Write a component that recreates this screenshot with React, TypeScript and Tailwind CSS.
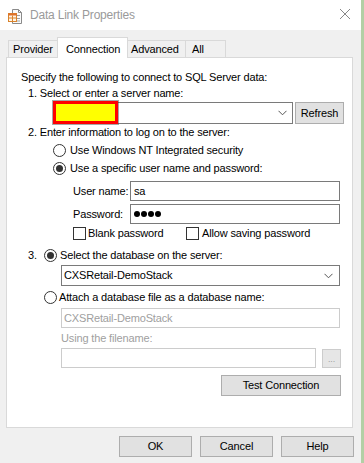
import React from "react";

const Radio = ({ checked }: { checked?: boolean }) => (
  <div className="w-[13px] h-[13px] rounded-full border border-[#333333] bg-white flex items-center justify-center shrink-0">
    {checked && <div className="w-[7px] h-[7px] rounded-full bg-[#333333]" />}
  </div>
);

const Check = () => (
  <div className="w-[13px] h-[13px] border border-[#333333] bg-white shrink-0" />
);

const Chevron = () => (
  <svg width="9" height="6" viewBox="0 0 9 6" className="shrink-0">
    <polyline points="0.5,0.8 4.5,4.8 8.5,0.8" fill="none" stroke="#555" strokeWidth="1" />
  </svg>
);

const Btn = ({ children, w, h = "h-[21px]" }: { children: React.ReactNode; w: string; h?: string }) => (
  <div className={`${w} ${h} bg-[#e1e1e1] border border-[#adadad] flex items-center justify-center shrink-0`}>
    {children}
  </div>
);

export default function App() {
  return (
    <div
      className="w-[364px] h-[463px] flex text-[11px] tracking-[-0.15px] text-black overflow-hidden"
      style={{ fontFamily: '"Liberation Sans", Arial, sans-serif' }}
    >
      <div className="w-[361px] h-full bg-[#f0f0f0] flex flex-col">
        {/* Title bar */}
        <div className="h-[30px] bg-white flex items-center shrink-0">
          <svg width="16" height="16" viewBox="0 0 16 16" className="ml-[7px] mt-[1px]">
            <path d="M5.5 1.5 H11.5 L14.5 4.5 V15.5 H5.5 Z" fill="#fafafa" stroke="#8a8a8a" />
            <path d="M11.5 1.5 V4.5 H14.5" fill="none" stroke="#8a8a8a" />
            <line x1="10" y1="7.5" x2="13" y2="7.5" stroke="#a0a0a0" />
            <line x1="10" y1="10.5" x2="13" y2="10.5" stroke="#a0a0a0" />
            <line x1="10" y1="13" x2="13" y2="13" stroke="#a0a0a0" />
            <rect x="1.5" y="5.5" width="8" height="8" fill="#fff5e6" stroke="#d9822b" />
            <rect x="1.5" y="5.5" width="8" height="2" fill="#e0702a" />
            <line x1="1.5" y1="10" x2="9.5" y2="10" stroke="#d9822b" />
            <line x1="5.5" y1="7.5" x2="5.5" y2="13.5" stroke="#d9822b" />
          </svg>
          <span className="ml-[7px] text-[12px] tracking-[-0.2px] text-[#9a9a9a]">Data Link Properties</span>
          <svg width="12" height="12" viewBox="0 0 12 12" className="ml-auto mr-[10px] mb-[2px]">
            <line x1="1" y1="1" x2="11" y2="11" stroke="#888" strokeWidth="1" />
            <line x1="11" y1="1" x2="1" y2="11" stroke="#888" strokeWidth="1" />
          </svg>
        </div>

        {/* Tabs */}
        <div className="mt-[7px] h-[20px] flex items-end pl-[8px] shrink-0">
          <div className="w-[49px] h-[17px] border-l border-t border-[#d9d9d9] flex items-center pl-[4px] pt-[1px]">Provider</div>
          <div className="w-[71px] h-[21px] -mb-px relative z-10 bg-white border-l border-t border-r border-[#d9d9d9] flex items-start pl-[8px] pt-[3px]">
            Connection
          </div>
          <div className="w-[58px] h-[17px] border-t border-r border-[#d9d9d9] flex items-center pl-[3px] pt-[1px]">Advanced</div>
          <div className="w-[40px] h-[17px] border-t border-r border-[#d9d9d9] flex items-center pl-[6px] pt-[1px]">All</div>
        </div>

        {/* Panel */}
        <div className="ml-[6px] w-[347px] h-[371px] bg-white border border-[#d9d9d9] flex flex-col shrink-0">
          <div className="mt-[12px] h-[14px] flex items-center pl-[14px]">
            Specify the following to connect to SQL Server data:
          </div>
          <div className="mt-[2px] h-[14px] flex items-center pl-[21px]">1. Select or enter a server name:</div>
          <div className="mt-[2px] h-[22px] flex items-center pl-[46px]">
            <div className="relative w-[240px] h-[22px] border border-[#7a7a7a] flex items-center justify-end pr-[5px]">
              <Chevron />
              <div className="absolute left-[-1px] top-[-2px] w-[65px] h-[23px] bg-[#ffff00] border-[3px] border-[#ff0000] shadow-[0_0_0_1px_rgba(60,60,60,0.45)]" />
            </div>
            <div className="ml-[2px]">
              <Btn w="w-[49px]" h="h-[22px]">Refresh</Btn>
            </div>
          </div>
          <div className="mt-[1px] h-[14px] flex items-center pl-[21px]">2. Enter information to log on to the server:</div>
          <div className="mt-[4px] h-[14px] flex items-center pl-[46px] gap-[4px]">
            <Radio />
            <span>Use Windows NT Integrated security</span>
          </div>
          <div className="mt-[4px] h-[14px] flex items-center pl-[46px] gap-[4px]">
            <Radio checked />
            <span>Use a specific user name and password:</span>
          </div>
          <div className="mt-[6px] h-[20px] flex items-center pl-[66px]">
            <span className="w-[57px] shrink-0">User name:</span>
            <div className="w-[210px] h-[20px] border border-[#7a7a7a] flex items-center pl-[3px]">sa</div>
          </div>
          <div className="mt-[3px] h-[20px] flex items-center pl-[66px]">
            <span className="w-[57px] shrink-0">Password:</span>
            <div className="w-[210px] h-[20px] border border-[#7a7a7a] flex items-center pl-[3px] gap-[1px]">
              <span className="w-[6px] h-[6px] rounded-full bg-black" />
              <span className="w-[6px] h-[6px] rounded-full bg-black" />
              <span className="w-[6px] h-[6px] rounded-full bg-black" />
              <span className="w-[6px] h-[6px] rounded-full bg-black" />
            </div>
          </div>
          <div className="mt-[2px] h-[14px] flex items-center pl-[66px]">
            <div className="w-[113px] flex items-center gap-[2px] shrink-0">
              <Check />
              <span>Blank password</span>
            </div>
            <div className="flex items-center gap-[3px]">
              <Check />
              <span>Allow saving password</span>
            </div>
          </div>
          <div className="mt-[8px] h-[14px] flex items-center pl-[21px]">
            <span className="w-[16px] shrink-0">3.</span>
            <Radio checked />
            <span className="ml-[3px]">Select the database on the server:</span>
          </div>
          <div className="mt-[3px] h-[21px] flex items-center pl-[54px]">
            <div className="w-[279px] h-[21px] border border-[#7a7a7a] flex items-center pl-[2px] pr-[6px] justify-between">
              <span>CXSRetail-DemoStack</span>
              <Chevron />
            </div>
          </div>
          <div className="mt-[4px] h-[14px] flex items-center pl-[37px] gap-[2px]">
            <Radio />
            <span>Attach a database file as a database name:</span>
          </div>
          <div className="mt-[4px] h-[20px] flex items-center pl-[54px]">
            <div className="w-[279px] h-[20px] border border-[#cccccc] flex items-center pl-[2px] text-[#a0a0a0]">
              CXSRetail-DemoStack
            </div>
          </div>
          <div className="mt-[3px] h-[14px] flex items-center pl-[54px] text-[#a0a0a0]">Using the filename:</div>
          <div className="mt-[3px] h-[20px] flex items-center pl-[54px]">
            <div className="w-[255px] h-[20px] border border-[#cccccc]" />
            <div className="ml-[6px] w-[19px] h-[19px] bg-[#e6e6e6] border border-[#cccccc] flex items-end justify-center pb-[3px] text-[#a0a0a0] text-[9px] leading-none">
              ...
            </div>
          </div>
          <div className="mt-[7px] h-[21px] flex items-center pl-[214px]">
            <Btn w="w-[120px]">Test Connection</Btn>
          </div>
        </div>

        {/* Bottom buttons */}
        <div className="mt-[8px] flex items-center pl-[119px] gap-[8px]">
          <Btn w="w-[73px]">OK</Btn>
          <Btn w="w-[73px]">Cancel</Btn>
          <Btn w="w-[73px]">Help</Btn>
        </div>
      </div>
      <div className="w-[3px] h-full bg-[#b3cfa5]" />
    </div>
  );
}
